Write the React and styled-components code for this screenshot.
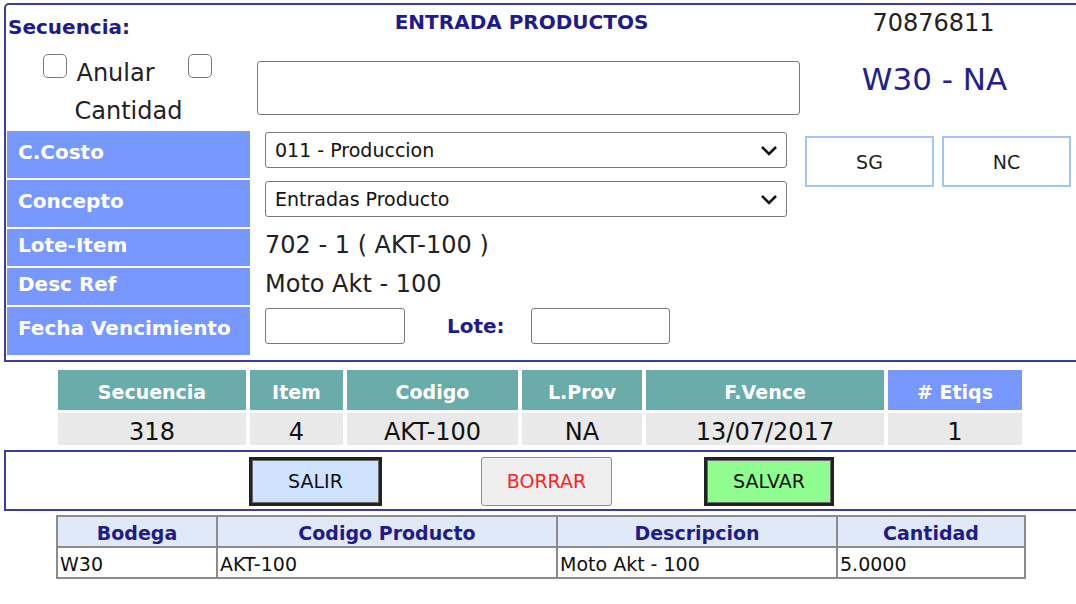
import styled, { createGlobalStyle } from "styled-components";

const GlobalStyle = createGlobalStyle`
  body {
    margin: 0;
    background: #fff;
    font-family: "DejaVu Sans", Verdana, sans-serif;
    color: #111;
  }
`;

const Page = styled.div`
  padding: 3px 0 0 4px;
  width: 1072px;
  overflow: hidden;
`;

const Panel = styled.div`
  box-sizing: border-box;
  width: 1090px;
  border: 2px solid #3d3d9e;
  border-radius: 5px 5px 0 0;
  padding: 1px 18px 5px 1px;
  display: grid;
  grid-template-columns: 243px 548px 270px;
  grid-template-rows: 38px 83px 47px 47px 37px 37px 48px;
  gap: 2px;
`;

const Sequence = styled.div`
  font-size: 20px;
  font-weight: bold;
  color: #1f1b8c;
  padding: 3px 0 0 1px;
  align-self: center;
`;

const Title = styled.div`
  font-size: 20px;
  font-weight: bold;
  color: #1f1b8c;
  text-align: center;
  padding: 4px 9px 0 0;
`;

const DocNumber = styled.div`
  font-size: 24px;
  text-align: center;
  padding: 3px 7px 0 0;
  color: #222;
`;

const CheckCell = styled.div`
  font-size: 24px;
  line-height: 38px;
  text-align: center;
  padding-top: 8px;
  color: #222;
`;

const Check = styled.input.attrs({ type: "checkbox" })`
  appearance: none;
  display: inline-block;
  box-sizing: border-box;
  width: 24px;
  height: 24px;
  margin: 0 2px 3px ${(p) => p.$gap || 0}px;
  border: 1.5px solid #7a7a7a;
  border-radius: 5px;
  background: #fff;
  vertical-align: baseline;
`;

const Notes = styled.textarea`
  box-sizing: border-box;
  width: 543px;
  height: 54px;
  margin-left: 5px;
  align-self: center;
  border: 1px solid #7a7a7a;
  border-radius: 3px;
  resize: none;
`;

const Warehouse = styled.div`
  font-size: 31px;
  color: #23208e;
  text-align: center;
  padding: 15px 5px 0 0;
`;

const Label = styled.div`
  background: #7799ff;
  color: #fff;
  font-size: 20px;
  font-weight: bold;
  display: flex;
  align-items: center;
  padding: 0 0 ${(p) => p.$lift || 4}px 11px;
`;

const Value = styled.div`
  display: flex;
  align-items: center;
  padding: 0 0 6px 13px;
  font-size: 24px;
  color: #222;
`;

const FieldRow = styled.div`
  display: flex;
  align-items: center;
  align-self: start;
  margin: 1px 0 0 13px;
  height: 36px;
`;

const SelectWrap = styled.div`
  position: relative;
  align-self: start;
  margin: 1px 0 0 13px;
  width: 522px;
  height: 36px;

  svg {
    position: absolute;
    right: 9px;
    top: 13px;
    pointer-events: none;
  }
`;

const Select = styled.select`
  appearance: none;
  box-sizing: border-box;
  width: 100%;
  height: 100%;
  border: 1px solid #7a7a7a;
  border-radius: 3px;
  background: #fff;
  font-family: "DejaVu Sans", Verdana, sans-serif;
  font-size: 19px;
  color: #111;
  padding: 0 0 0 9px;
`;

const TextBox = styled.input`
  box-sizing: border-box;
  width: ${(p) => p.$w}px;
  height: 36px;
  border: 1px solid #7a7a7a;
  border-radius: 3px;
`;

const InlineLabel = styled.span`
  font-size: 20px;
  font-weight: bold;
  color: #1f1b8c;
  margin: 0 26px 0 42px;
`;

const SideButtons = styled.div`
  grid-column: 3;
  grid-row: 3 / span 2;
  display: flex;
  gap: 8px;
  align-self: start;
  margin: 5px 0 0 3px;
`;

const SideButton = styled.button`
  box-sizing: border-box;
  width: 129px;
  height: 51px;
  background: #fff;
  border: 2px solid #a3c6f3;
  font-family: "DejaVu Sans", Verdana, sans-serif;
  font-size: 19px;
  color: #222;
`;

const Summary = styled.div`
  display: grid;
  grid-template-columns: 188px 93px 171px 120px 238px 134px;
  grid-template-rows: 40px 32px;
  column-gap: 4px;
  row-gap: 3px;
  margin: 8px 0 0 54px;
`;

const HeadCell = styled.div`
  background: ${(p) => (p.$alt ? "#7799ff" : "#69acaa")};
  color: #fff;
  font-size: 19px;
  font-weight: bold;
  display: flex;
  align-items: center;
  justify-content: center;
  padding-top: 4px;
`;

const BodyCell = styled.div`
  background: #e9e9e9;
  font-size: 24px;
  color: #111;
  display: flex;
  align-items: center;
  justify-content: center;
  padding-top: 5px;
`;

const ActionBar = styled.div`
  box-sizing: border-box;
  width: 1090px;
  height: 61px;
  margin-top: 5px;
  border: 2px solid #3d3d9e;
  display: flex;
  align-items: center;
  padding: 1px 0 0 0;
`;

const ActionButton = styled.button`
  box-sizing: border-box;
  width: ${(p) => p.$w}px;
  height: 49px;
  margin-left: ${(p) => p.$offset}px;
  font-family: "DejaVu Sans", Verdana, sans-serif;
  font-size: 19px;
  color: ${(p) => (p.$danger ? "#ff1f1f" : "#111")};
  background: ${(p) => p.$bg};
  border: ${(p) => (p.$soft ? "1px solid #8f8f8f" : "3px solid #222")};
  border-radius: ${(p) => (p.$soft ? "3px" : "0")};
  box-shadow: ${(p) => (p.$soft ? "none" : "inset 0 0 0 1px #6a6a6a")};
`;

const Detail = styled.table`
  border-collapse: collapse;
  table-layout: fixed;
  width: 968px;
  margin: 4px 0 0 52px;

  th,
  td {
    border: 2px solid #8c8c8c;
    height: 27px;
    font-size: 19px;
    padding: 2px 2px 0;
  }

  th {
    background: #dfe9f7;
    color: #1f1b8c;
    font-weight: bold;
    text-align: center;
  }

  td {
    text-align: left;
    color: #111;
  }
`;

const Chevron = () => (
  <svg width="18" height="11" viewBox="0 0 18 11">
    <polyline points="2,2 9,9 16,2" fill="none" stroke="#111" strokeWidth="2.6" />
  </svg>
);

const summaryHead = ["Secuencia", "Item", "Codigo", "L.Prov", "F.Vence"];
const summaryRow = ["318", "4", "AKT-100", "NA", "13/07/2017", "1"];

export default function App() {
  return (
    <Page>
      <GlobalStyle />
      <Panel>
        <Sequence>Secuencia:</Sequence>
        <Title>ENTRADA PRODUCTOS</Title>
        <DocNumber>70876811</DocNumber>

        <CheckCell>
          <Check /> Anular <Check $gap={26} /> Cantidad
        </CheckCell>
        <Notes />
        <Warehouse>W30 - NA</Warehouse>

        <Label $lift={5}>C.Costo</Label>
        <SelectWrap>
          <Select defaultValue="011">
            <option value="011">011 - Produccion</option>
          </Select>
          <Chevron />
        </SelectWrap>
        <SideButtons>
          <SideButton>SG</SideButton>
          <SideButton>NC</SideButton>
        </SideButtons>

        <Label $lift={5}>Concepto</Label>
        <SelectWrap>
          <Select defaultValue="ep">
            <option value="ep">Entradas Producto</option>
          </Select>
          <Chevron />
        </SelectWrap>

        <Label $lift={6}>Lote-Item</Label>
        <Value>702 - 1 ( AKT-100 )</Value>
        <div />

        <Label $lift={6}>Desc Ref</Label>
        <Value>Moto Akt - 100</Value>
        <div />

        <Label $lift={6}>Fecha Vencimiento</Label>
        <FieldRow>
          <TextBox $w={140} />
          <InlineLabel>Lote:</InlineLabel>
          <TextBox $w={139} />
        </FieldRow>
      </Panel>

      <Summary>
        {summaryHead.map((h) => (
          <HeadCell key={h}>{h}</HeadCell>
        ))}
        <HeadCell $alt># Etiqs</HeadCell>
        {summaryRow.map((v, i) => (
          <BodyCell key={i}>{v}</BodyCell>
        ))}
      </Summary>

      <ActionBar>
        <ActionButton $w={133} $offset={243} $bg="#cfe2ff">SALIR</ActionButton>
        <ActionButton $w={131} $offset={99} $bg="#efefef" $soft $danger>BORRAR</ActionButton>
        <ActionButton $w={130} $offset={92} $bg="#90fd90">SALVAR</ActionButton>
      </ActionBar>

      <Detail>
        <colgroup>
          <col style={{ width: 160 }} />
          <col style={{ width: 340 }} />
          <col style={{ width: 280 }} />
          <col style={{ width: 188 }} />
        </colgroup>
        <thead>
          <tr>
            <th>Bodega</th>
            <th>Codigo Producto</th>
            <th>Descripcion</th>
            <th>Cantidad</th>
          </tr>
        </thead>
        <tbody>
          <tr>
            <td>W30</td>
            <td>AKT-100</td>
            <td>Moto Akt - 100</td>
            <td>5.0000</td>
          </tr>
        </tbody>
      </Detail>
    </Page>
  );
}
